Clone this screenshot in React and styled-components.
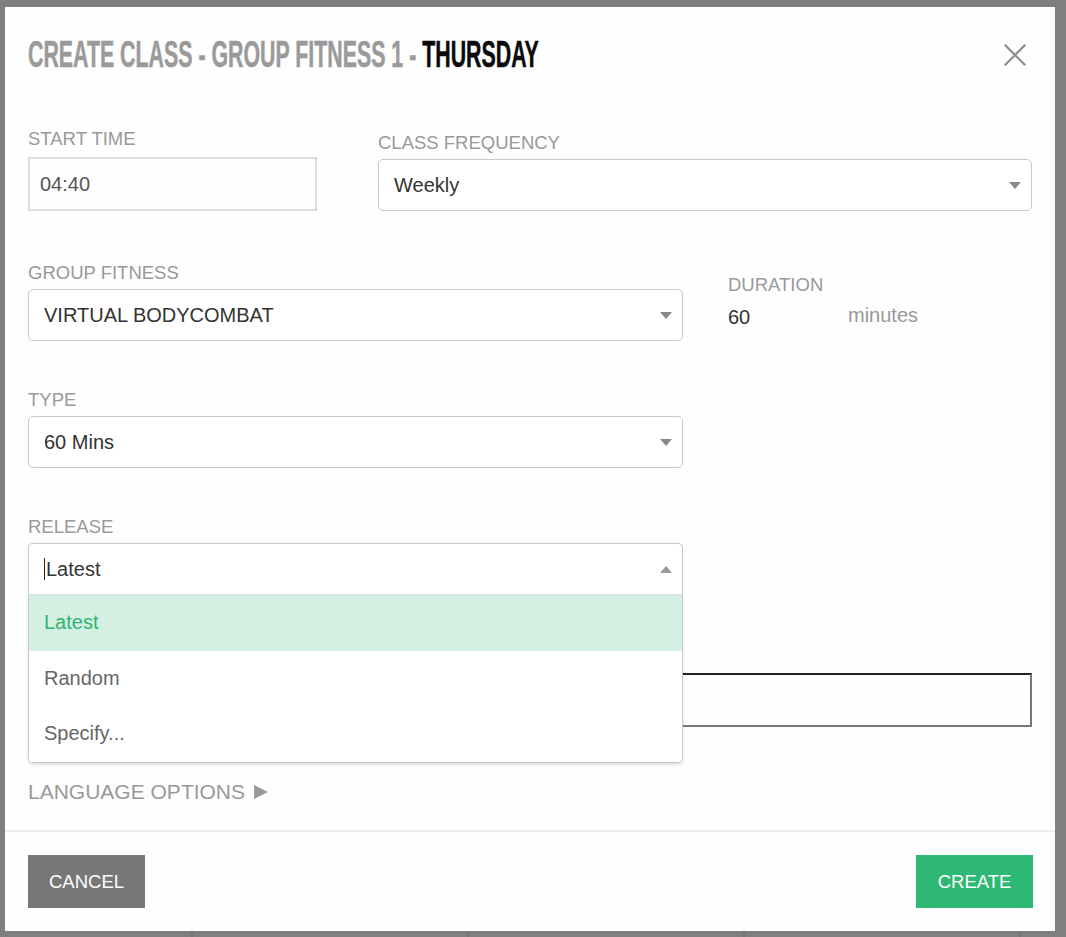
import React from "react";
import styled, { createGlobalStyle } from "styled-components";

const GlobalStyle = createGlobalStyle`
  html, body {
    margin: 0;
    padding: 0;
    background: #7f7f7f;
    font-family: "Liberation Sans", Arial, sans-serif;
  }
  #root {
    min-height: 937px;
  }
`;

const releaseOptions = ["Latest", "Random", "Specify..."];

const App = () => {
  return (
    <>
      <GlobalStyle />
      <Backdrop>
        <Modal>
          <Header>
            <Title>
              <TitleInner>
                CREATE CLASS - GROUP FITNESS 1 - <Day>THURSDAY</Day>
              </TitleInner>
            </Title>
            <CloseButton aria-label="close">
              <svg width="22" height="22" viewBox="0 0 22 22">
                <path
                  d="M1.5 1.5 L20.5 20.5 M20.5 1.5 L1.5 20.5"
                  stroke="#8c8c8c"
                  strokeWidth="2.2"
                  strokeLinecap="square"
                />
              </svg>
            </CloseButton>
          </Header>

          <Body>
            <Row $top={53} $gap={61}>
              <Field $width={289}>
                <Label>START TIME</Label>
                <TextInput>04:40</TextInput>
              </Field>
              <Field $width={654} $shift={4}>
                <Label>CLASS FREQUENCY</Label>
                <Select>
                  <SelectValue>Weekly</SelectValue>
                  <Caret />
                </Select>
              </Field>
            </Row>

            <Row $top={51} $gap={45}>
              <Field $width={655}>
                <Label>GROUP FITNESS</Label>
                <Select>
                  <SelectValue>VIRTUAL BODYCOMBAT</SelectValue>
                  <Caret />
                </Select>
              </Field>
              <Field $shift={12}>
                <Label>DURATION</Label>
                <Duration>
                  <DurationValue>60</DurationValue>
                  <Unit>minutes</Unit>
                </Duration>
              </Field>
            </Row>

            <Row $top={48}>
              <Field $width={655}>
                <Label>TYPE</Label>
                <Select>
                  <SelectValue>60 Mins</SelectValue>
                  <Caret />
                </Select>
              </Field>
            </Row>

            <Row $top={48}>
              <Field $width={655}>
                <Label>RELEASE</Label>
                <SelectWrap>
                  <Select $open>
                    <SelectValue>
                      <Cursor />
                      Latest
                    </SelectValue>
                    <Caret $up />
                  </Select>
                  <Menu>
                    {releaseOptions.map((opt, i) => (
                      <Option key={opt} $active={i === 0}>
                        {opt}
                      </Option>
                    ))}
                  </Menu>
                </SelectWrap>
              </Field>
            </Row>

            <HiddenInput />

            <LanguageToggle>
              LANGUAGE OPTIONS <Arrow />
            </LanguageToggle>
          </Body>

          <Footer>
            <Button $variant="cancel">CANCEL</Button>
            <Button $variant="create">CREATE</Button>
          </Footer>
        </Modal>
      </Backdrop>
    </>
  );
};

export default App;

const Backdrop = styled.div`
  width: 1066px;
  height: 937px;
  padding: 7px 0 0 5px;
  box-sizing: border-box;
  background-color: #7f7f7f;
  background-image: repeating-linear-gradient(
    to right,
    transparent 0 191px,
    #757575 191px 193px,
    transparent 193px 276px
  );
  background-repeat: no-repeat;
  background-position: left bottom;
  background-size: 100% 8px;
  overflow: hidden;
`;

const Modal = styled.div`
  width: 1050px;
  height: 924px;
  background: #fefefe;
  display: flex;
  flex-direction: column;
  box-sizing: border-box;
`;

const Header = styled.div`
  display: flex;
  justify-content: space-between;
  align-items: center;
  padding: 28px 29px 0 23px;
  height: 40px;
`;

const Title = styled.h1`
  margin: 0;
  font-family: "Liberation Sans", Arial, sans-serif;
  font-weight: 700;
  font-size: 36px;
  line-height: 40px;
  color: #9a9a9a;
  white-space: nowrap;
`;

const TitleInner = styled.span`
  display: inline-block;
  transform: scaleX(0.593);
  transform-origin: left center;
  -webkit-text-stroke: 0.5px currentColor;
`;

const Day = styled.span`
  color: #0a0a0a;
`;

const CloseButton = styled.button`
  border: none;
  background: none;
  padding: 0;
  width: 22px;
  height: 22px;
  display: flex;
  cursor: pointer;
`;

const Body = styled.div`
  flex: 1;
  padding: 0 23px;
  display: flex;
  flex-direction: column;
`;

const Row = styled.div`
  display: flex;
  align-items: flex-start;
  gap: ${(p) => p.$gap || 0}px;
  margin-top: ${(p) => p.$top}px;
`;

const Field = styled.div`
  display: flex;
  flex-direction: column;
  width: ${(p) => (p.$width ? `${p.$width}px` : "auto")};
  padding-top: ${(p) => p.$shift || 0}px;
  gap: 5px;
`;

const Label = styled.label`
  display: block;
  font-size: 18.5px;
  line-height: 22px;
  color: #999;
`;

const TextInput = styled.div`
  margin-top: 2px;
  height: 54px;
  box-sizing: border-box;
  border: 2px solid #dcdcdc;
  padding: 0 10px;
  display: flex;
  align-items: center;
  font-size: 20px;
  color: #555;
`;

const SelectWrap = styled.div`
  position: relative;
`;

const Select = styled.div`
  height: 52px;
  box-sizing: border-box;
  border: 1.5px solid #c8c8c8;
  border-radius: ${(p) => (p.$open ? "5px 5px 0 0" : "5px")};
  border-bottom-color: ${(p) => (p.$open ? "#e2e2e2" : "#c8c8c8")};
  padding: 0 10px 0 15px;
  display: flex;
  align-items: center;
  justify-content: space-between;
  background: #fff;
`;

const SelectValue = styled.span`
  display: flex;
  align-items: center;
  font-size: 20px;
  color: #333;
`;

const Cursor = styled.span`
  width: 1px;
  height: 22px;
  background: #222;
  margin-right: 1px;
`;

const Caret = styled.span`
  width: 0;
  height: 0;
  border-left: 6px solid transparent;
  border-right: 6px solid transparent;
  ${(p) =>
    p.$up
      ? "border-bottom: 7px solid #999;"
      : "border-top: 7px solid #888;"}
`;

const Menu = styled.div`
  position: absolute;
  top: 100%;
  left: 0;
  right: 0;
  z-index: 2;
  background: #fff;
  border: 1.5px solid #c8c8c8;
  border-top: none;
  border-radius: 0 0 5px 5px;
  box-shadow: 0 2px 3px rgba(0, 0, 0, 0.12);
  overflow: hidden;
`;

const Option = styled.div`
  height: 55.5px;
  display: flex;
  align-items: center;
  padding: 0 15px;
  font-size: 20px;
  color: ${(p) => (p.$active ? "#2db573" : "#666")};
  background: ${(p) => (p.$active ? "#d5efe2" : "#fff")};
`;

const Duration = styled.div`
  display: flex;
  align-items: center;
  height: 30px;
`;

const DurationValue = styled.span`
  width: 120px;
  font-size: 20px;
  color: #333;
  padding-top: 2px;
`;

const Unit = styled.span`
  font-size: 20px;
  color: #999;
  padding-bottom: 2px;
`;

const HiddenInput = styled.div`
  margin-top: 78px;
  height: 54px;
  box-sizing: border-box;
  border-style: solid;
  border-width: 2px;
  border-color: #222 #777 #777 #222;
`;

const LanguageToggle = styled.div`
  margin-top: 53px;
  font-size: 21px;
  line-height: 24px;
  color: #999;
  display: flex;
  align-items: center;
  gap: 9px;
`;

const Arrow = styled.span`
  width: 0;
  height: 0;
  border-top: 7px solid transparent;
  border-bottom: 7px solid transparent;
  border-left: 14px solid #999;
`;

const Footer = styled.div`
  border-top: 2px solid #eee;
  padding: 23px 22px 23px 23px;
  display: flex;
  justify-content: space-between;
`;

const Button = styled.button`
  width: 117px;
  height: 53px;
  border: none;
  font-family: "Liberation Sans", Arial, sans-serif;
  font-size: 18.5px;
  color: #fff;
  background: ${(p) => (p.$variant === "create" ? "#2db873" : "#777")};
  cursor: pointer;
`;
